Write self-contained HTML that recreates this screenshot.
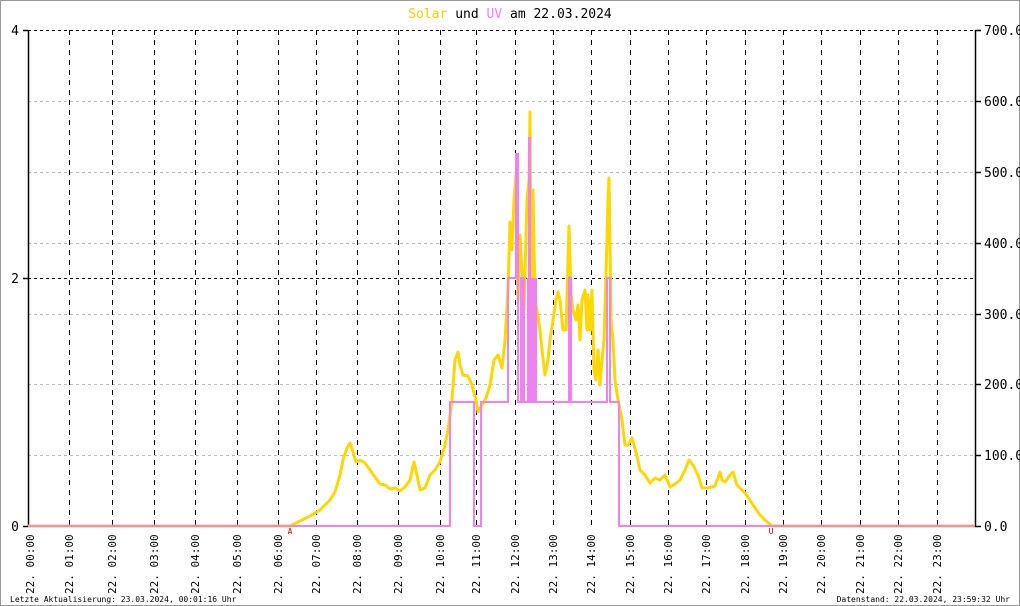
<!DOCTYPE html>
<html><head><meta charset="utf-8"><style>
html,body{margin:0;padding:0;background:#fff}
svg{display:block}
text{font-family:"DejaVu Sans Mono","Liberation Mono",monospace}
</style></head><body>
<svg width="1020" height="606" viewBox="0 0 1020 606" xmlns="http://www.w3.org/2000/svg">
<rect x="0.5" y="0.5" width="1019" height="605" fill="#fff" stroke="#999"/>
<text x="510" y="18" font-size="13" text-anchor="middle"><tspan fill="#ffcc00">Solar</tspan><tspan fill="#000"> und </tspan><tspan fill="#ee82ee">UV</tspan><tspan fill="#000"> am 22.03.2024</tspan></text>
<g stroke="#bbb" stroke-dasharray="3,3" stroke-width="1">
<line x1="28" y1="101.5" x2="975" y2="101.5"/><line x1="28" y1="172.5" x2="975" y2="172.5"/><line x1="28" y1="243.5" x2="975" y2="243.5"/><line x1="28" y1="314.5" x2="975" y2="314.5"/><line x1="28" y1="384.5" x2="975" y2="384.5"/><line x1="28" y1="455.5" x2="975" y2="455.5"/>
</g>
<g stroke="#000" stroke-dasharray="3,3" stroke-width="1">
<line x1="28" y1="30.5" x2="975" y2="30.5"/><line x1="28" y1="278.5" x2="975" y2="278.5"/>
</g>
<g stroke="#000" stroke-dasharray="5,5" stroke-width="1">
<line x1="69.5" y1="30" x2="69.5" y2="526"/><line x1="112.5" y1="30" x2="112.5" y2="526"/><line x1="154.5" y1="30" x2="154.5" y2="526"/><line x1="195.5" y1="30" x2="195.5" y2="526"/><line x1="237.5" y1="30" x2="237.5" y2="526"/><line x1="278.5" y1="30" x2="278.5" y2="526"/><line x1="316.5" y1="30" x2="316.5" y2="526"/><line x1="357.5" y1="30" x2="357.5" y2="526"/><line x1="398.5" y1="30" x2="398.5" y2="526"/><line x1="440.5" y1="30" x2="440.5" y2="526"/><line x1="476.5" y1="30" x2="476.5" y2="526"/><line x1="515.5" y1="30" x2="515.5" y2="526"/><line x1="553.5" y1="30" x2="553.5" y2="526"/><line x1="591.5" y1="30" x2="591.5" y2="526"/><line x1="630.5" y1="30" x2="630.5" y2="526"/><line x1="668.5" y1="30" x2="668.5" y2="526"/><line x1="706.5" y1="30" x2="706.5" y2="526"/><line x1="745.5" y1="30" x2="745.5" y2="526"/><line x1="783.5" y1="30" x2="783.5" y2="526"/><line x1="821.5" y1="30" x2="821.5" y2="526"/><line x1="860.5" y1="30" x2="860.5" y2="526"/><line x1="898.5" y1="30" x2="898.5" y2="526"/><line x1="937.5" y1="30" x2="937.5" y2="526"/>
</g>
<g stroke="#000" stroke-width="1.5">
<line x1="28.5" y1="30" x2="28.5" y2="526"/><line x1="975.5" y1="30" x2="975.5" y2="526"/>
<line x1="23" y1="30.5" x2="28" y2="30.5"/><line x1="23" y1="278.5" x2="28" y2="278.5"/><line x1="23" y1="526.5" x2="28" y2="526.5"/>
<line x1="975" y1="30.5" x2="981" y2="30.5"/><line x1="975" y1="101.5" x2="981" y2="101.5"/><line x1="975" y1="172.5" x2="981" y2="172.5"/><line x1="975" y1="243.5" x2="981" y2="243.5"/><line x1="975" y1="314.5" x2="981" y2="314.5"/><line x1="975" y1="384.5" x2="981" y2="384.5"/><line x1="975" y1="455.5" x2="981" y2="455.5"/><line x1="975" y1="526.5" x2="981" y2="526.5"/>
</g>
<g font-size="13" fill="#000" text-anchor="end">
<text x="19" y="35">4</text><text x="19" y="283">2</text><text x="19" y="531">0</text>
</g>
<g font-size="13" fill="#000">
<text x="984" y="35">700.0</text><text x="984" y="106">600.0</text><text x="984" y="177">500.0</text><text x="984" y="248">400.0</text><text x="984" y="319">300.0</text><text x="984" y="389">200.0</text><text x="984" y="460">100.0</text><text x="984" y="531">0.0</text>
</g>
<polyline fill="none" stroke="#ffd700" stroke-width="3" stroke-linejoin="round" points="28,526 290,526 300,521 310,516 320,510 330,500 335,492 340,475 343,460 347,448 350,443 353,452 356,462 360,460 365,463 370,470 375,477 380,484 385,485 390,489 395,488 400,491 405,487 410,480 414,462 417,475 420,490 425,488 430,475 435,470 440,462 445,445 448,430 452,400 455,360 458,352 460,365 463,375 468,376 472,385 476,400 478,412 482,405 486,398 490,385 494,360 498,355 502,368 505,340 508,290 510,222 512,250 514,200 516,175 517,255 518,300 520,235 522,270 524,310 527,200 529,180 530,112 531,330 533,190 535,300 537,310 540,330 542,350 545,375 548,360 550,340 553,320 556,300 558,292 560,300 563,330 566,330 569,226 571,295 573,310 576,320 578,305 580,340 582,300 585,290 587,330 588,295 590,330 592,290 594,370 596,380 598,350 600,385 602,360 604,340 606,275 608,200 609,178 611,320 613,340 615,380 618,400 622,420 625,445 628,445 632,438 636,452 640,470 645,475 650,483 655,478 660,480 665,475 670,487 675,484 680,480 685,470 689,460 693,465 698,475 702,488 708,488 715,486 720,472 722,480 725,482 730,475 733,472 737,485 740,488 745,493 750,500 755,508 760,515 765,520 772,526 975,526"/>
<rect x="527" y="278" width="10" height="124" fill="#ee82ee"/>
<rect x="520" y="278" width="5" height="124" fill="#ee82ee"/>
<polyline fill="none" stroke="#ee82ee" stroke-width="2" points="28,526 450,526 450,402 474,402 474,526 481,526 481,402 508,402 508,278 516,278 516,154 518,154 518,402 521,402 521,278 523,278 523,402 529,402 529,138 530,138 530,402 569,402 569,278 571,278 571,402 607,402 607,278 610,278 610,402 619,402 619,526 975,526"/>
<text x="290" y="534" font-size="8" fill="#d00" text-anchor="middle">A</text>
<text x="771" y="534" font-size="8" fill="#d00" text-anchor="middle">U</text>
<g font-size="11" fill="#000">
<text transform="translate(34,594) rotate(-90)">22. 00:00</text>
<text transform="translate(73,594) rotate(-90)">22. 01:00</text>
<text transform="translate(116,594) rotate(-90)">22. 02:00</text>
<text transform="translate(158,594) rotate(-90)">22. 03:00</text>
<text transform="translate(199,594) rotate(-90)">22. 04:00</text>
<text transform="translate(241,594) rotate(-90)">22. 05:00</text>
<text transform="translate(282,594) rotate(-90)">22. 06:00</text>
<text transform="translate(320,594) rotate(-90)">22. 07:00</text>
<text transform="translate(361,594) rotate(-90)">22. 08:00</text>
<text transform="translate(402,594) rotate(-90)">22. 09:00</text>
<text transform="translate(444,594) rotate(-90)">22. 10:00</text>
<text transform="translate(480,594) rotate(-90)">22. 11:00</text>
<text transform="translate(519,594) rotate(-90)">22. 12:00</text>
<text transform="translate(557,594) rotate(-90)">22. 13:00</text>
<text transform="translate(595,594) rotate(-90)">22. 14:00</text>
<text transform="translate(634,594) rotate(-90)">22. 15:00</text>
<text transform="translate(672,594) rotate(-90)">22. 16:00</text>
<text transform="translate(710,594) rotate(-90)">22. 17:00</text>
<text transform="translate(749,594) rotate(-90)">22. 18:00</text>
<text transform="translate(787,594) rotate(-90)">22. 19:00</text>
<text transform="translate(825,594) rotate(-90)">22. 20:00</text>
<text transform="translate(864,594) rotate(-90)">22. 21:00</text>
<text transform="translate(902,594) rotate(-90)">22. 22:00</text>
<text transform="translate(941,594) rotate(-90)">22. 23:00</text>
</g>
<text x="10" y="602" font-size="8" fill="#000">Letzte Aktualisierung: 23.03.2024, 00:01:16 Uhr</text>
<text x="1010" y="602" font-size="8" fill="#000" text-anchor="end">Datenstand: 22.03.2024, 23:59:32 Uhr</text>
</svg>
</body></html>
